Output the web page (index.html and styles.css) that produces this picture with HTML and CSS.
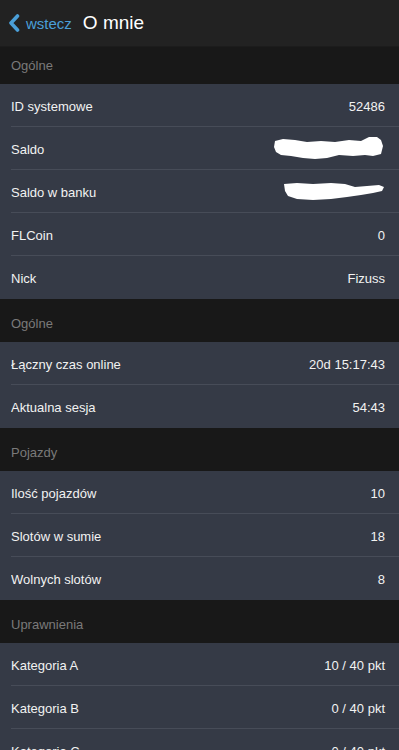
FILE: index.html
```
<!DOCTYPE html>
<html lang="pl">
<head>
<meta charset="utf-8">
<link rel="stylesheet" href="styles.css">
</head>
<body>
<div class="app">
  <header class="topbar">
    <a class="back">
      <svg class="chev" width="12" height="18" viewBox="0 0 12 18"><path d="M9.5 2 L3 9 L9.5 16" fill="none" stroke="#4a9fd8" stroke-width="3.6" stroke-linecap="round" stroke-linejoin="round"/></svg>
      <span>wstecz</span>
    </a>
    <h1 class="title">O mnie</h1>
  </header>

  <div class="section first">Ogólne</div>
  <div class="row"><span class="label">ID systemowe</span><span class="value">52486</span></div>
  <div class="row"><span class="label">Saldo</span><span class="value">
    <svg width="112" height="26" viewBox="0 0 112 26"><path d="M2 5 L10 3 L22 4 L34 6 L48 5 L62 6 L76 4 L88 5 L96 1 L104 1 L108 4 L110 10 L108 18 L100 20 L92 19 L80 20 L66 19 L54 22 L42 23 L30 22 L18 20 L8 19 L3 16 L1 11 Z" fill="#fff"/></svg>
  </span></div>
  <div class="row"><span class="label">Saldo w banku</span><span class="value">
    <svg width="102" height="22" viewBox="0 0 102 22"><path d="M1 3 L14 2 L30 3 L48 2 L62 3 L72 6 L84 5 L96 4 L101 6 L99 10 L90 12 L78 14 L64 16 L48 18 L30 19 L14 18 L5 15 L2 10 Z" fill="#fff"/></svg>
  </span></div>
  <div class="row"><span class="label">FLCoin</span><span class="value">0</span></div>
  <div class="row last"><span class="label">Nick</span><span class="value">Fizuss</span></div>

  <div class="section">Ogólne</div>
  <div class="row"><span class="label">Łączny czas online</span><span class="value">20d 15:17:43</span></div>
  <div class="row last"><span class="label">Aktualna sesja</span><span class="value">54:43</span></div>

  <div class="section">Pojazdy</div>
  <div class="row"><span class="label">Ilość pojazdów</span><span class="value">10</span></div>
  <div class="row"><span class="label">Slotów w sumie</span><span class="value">18</span></div>
  <div class="row last"><span class="label">Wolnych slotów</span><span class="value">8</span></div>

  <div class="section">Uprawnienia</div>
  <div class="row"><span class="label">Kategoria A</span><span class="value">10 / 40 pkt</span></div>
  <div class="row"><span class="label">Kategoria B</span><span class="value">0 / 40 pkt</span></div>
  <div class="row"><span class="label">Kategoria C</span><span class="value">0 / 40 pkt</span></div>
</div>
</body>
</html>
```

FILE: styles.css
```
* { box-sizing: border-box; }
html, body {
  margin: 0;
  padding: 0;
  background: #353a46;
  font-family: "Liberation Sans", Arial, sans-serif;
  overflow: hidden;
}
.app {
  width: 399px;
  height: 750px;
  overflow: hidden;
  display: flex;
  flex-direction: column;
}
.topbar {
  height: 47px;
  flex: none;
  background: #222222;
  border-bottom: 1px solid #1c1c1c;
  display: flex;
  align-items: center;
  padding: 0 0 0 8px;
}
.back {
  display: flex;
  align-items: center;
  gap: 6px;
  color: #4a9fd8;
  font-size: 15px;
  margin-right: 11px;
}
.chev { display: block; }
.title {
  margin: 0;
  font-size: 19px;
  font-weight: normal;
  color: #ffffff;
}
.section {
  height: 43px;
  flex: none;
  background: #181818;
  color: #7a7a7a;
  font-size: 13px;
  display: flex;
  align-items: center;
  padding: 6px 0 0 11px;
}
.section.first { height: 37px; padding-top: 0; }
.row {
  height: 43px;
  flex: none;
  background: #353a46;
  display: flex;
  align-items: center;
  justify-content: space-between;
  margin-left: 11px;
  padding: 2px 14px 0 0;
  border-bottom: 1px solid #474c58;
  color: #f2f2f2;
  font-size: 13px;
  position: relative;
}
.row::before {
  content: "";
  position: absolute;
  left: -11px;
  top: 0;
  bottom: -1px;
  width: 11px;
  background: #353a46;
}
.row.last { border-bottom-color: #353a46; }
.value {
  display: flex;
  align-items: center;
}
.value svg { display: block; }
```
